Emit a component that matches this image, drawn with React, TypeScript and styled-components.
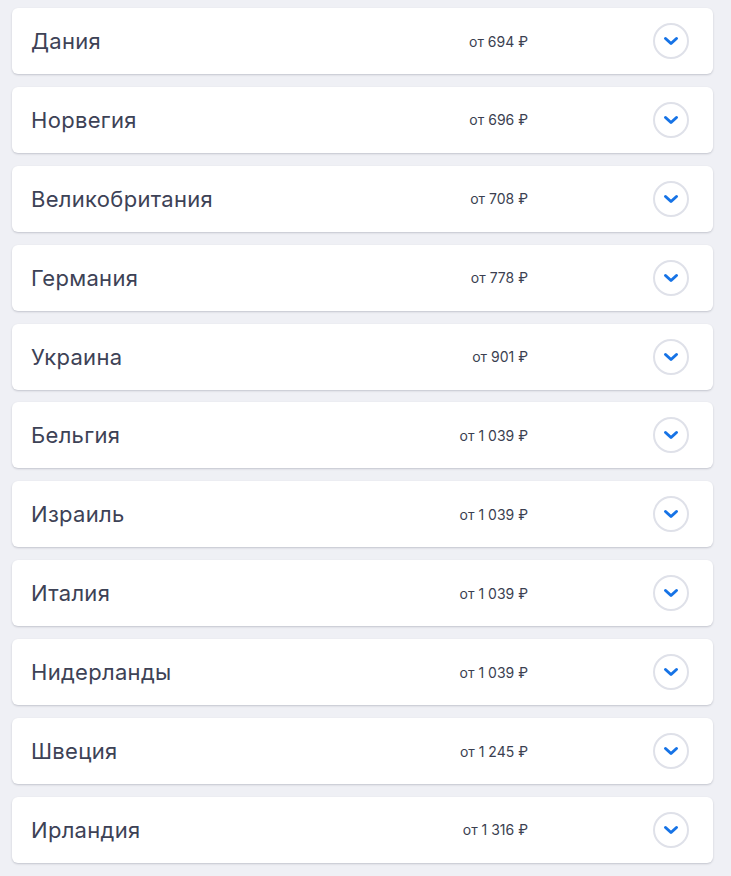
import React from "react";
import styled, { createGlobalStyle } from "styled-components";

const Global = createGlobalStyle`
  html, body { margin: 0; padding: 0; background: #eff0f5; }
  body { font-family: Inter, "Noto Sans", sans-serif; }
`;

const List = styled.div`
  display: flex;
  flex-direction: column;
  gap: 12.9px;
  padding: 8px 18px 0 12px;
  height: 876px;
  overflow: hidden;
  box-sizing: border-box;
`;

const Card = styled.div`
  flex: none;
  display: grid;
  grid-template-columns: 1fr auto 36px;
  align-items: center;
  height: 66px;
  box-sizing: border-box;
  padding: 0 24px 0 19px;
  background: #fff;
  border-radius: 6px;
  box-shadow: 0 1px 2px rgba(40, 45, 70, 0.22);
`;

const Name = styled.span`
  font-size: 22px;
  color: #3d4256;
  letter-spacing: 0.3px;
`;

const Price = styled.span`
  font-size: 14px;
  color: #3b3f51;
  margin-right: 125px;
  letter-spacing: 0;
`;

const Toggle = styled.button`
  width: 36px;
  height: 36px;
  padding: 0;
  border: 2px solid #dfe1e9;
  border-radius: 50%;
  background: #fff;
  display: flex;
  align-items: center;
  justify-content: center;
  box-sizing: border-box;
`;

const Chevron = () => (
  <svg width="16" height="10" viewBox="0 0 16 10">
    <path d="M2.5 2.5 L8 7.5 L13.5 2.5" fill="none" stroke="#1673e6" strokeWidth="3" strokeLinecap="round" strokeLinejoin="round" />
  </svg>
);

const rows: [string, string][] = [
  ["Дания", "от 694 ₽"],
  ["Норвегия", "от 696 ₽"],
  ["Великобритания", "от 708 ₽"],
  ["Германия", "от 778 ₽"],
  ["Украина", "от 901 ₽"],
  ["Бельгия", "от 1 039 ₽"],
  ["Израиль", "от 1 039 ₽"],
  ["Италия", "от 1 039 ₽"],
  ["Нидерланды", "от 1 039 ₽"],
  ["Швеция", "от 1 245 ₽"],
  ["Ирландия", "от 1 316 ₽"],
];

export default function App() {
  return (
    <>
      <Global />
      <List>
        {rows.map(([n, p], i) => (
          <Card key={i}>
            <Name>{n}</Name>
            <Price>{p}</Price>
            <Toggle aria-label="Развернуть">
              <Chevron />
            </Toggle>
          </Card>
        ))}
      </List>
    </>
  );
}
